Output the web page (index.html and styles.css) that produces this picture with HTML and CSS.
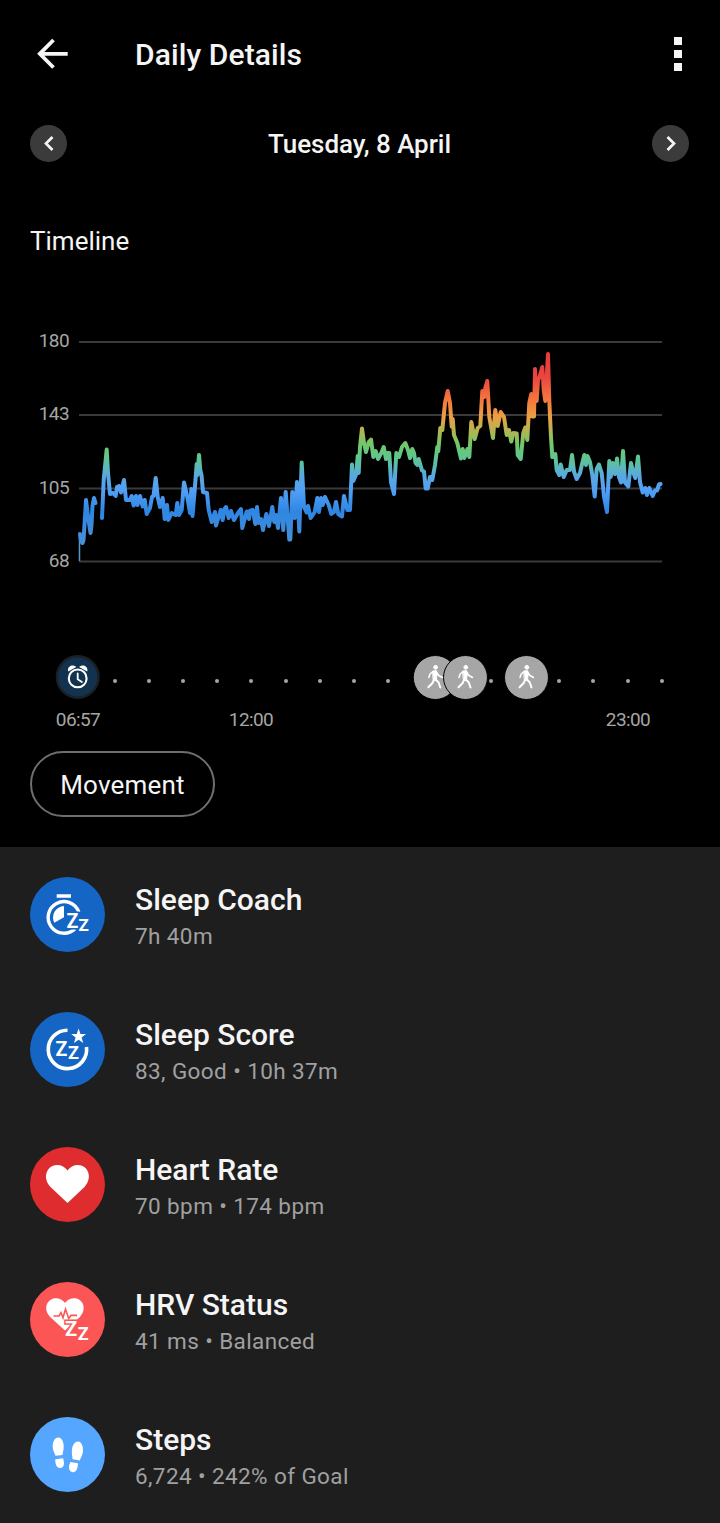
FILE: index.html
```html
<!DOCTYPE html>
<html lang="en">
<head>
    <meta charset="UTF-8">
    <meta name="viewport" content="width=device-width, initial-scale=1.0">
    <title>Daily Details</title>
    <link rel="stylesheet" href="styles.css">
</head>
<body>
    <header class="topbar">
        <svg class="back" width="32" height="32" viewBox="0 0 32 32"><path d="M30.700 15.800H3.500M16.500 2L2.800 15.800l13.700 13.700"/></svg>
        <h1>Daily Details</h1>
        <div class="menu"><i></i><i></i><i></i></div>
    </header>

    <nav class="day">
        <a class="arrow" href="#"><svg width="37" height="37" viewBox="0 0 37 37"><path d="M22.500 12l-6.500 6.500 6.500 6.500"/></svg></a>
        <span>Tuesday, 8 April</span>
        <a class="arrow" href="#"><svg width="37" height="37" viewBox="0 0 37 37"><path d="M15.500 12l6.500 6.500-6.500 6.500"/></svg></a>
    </nav>

    <section class="timeline">
        <h2>Timeline</h2>

        <svg class="chart" width="720" height="260" viewBox="0 320 720 260">
            <defs>
                <linearGradient id="zones" gradientUnits="userSpaceOnUse" x1="0" y1="352" x2="0" y2="562">
                    <stop offset="0" stop-color="#e93a3c"/>
                    <stop offset=".12" stop-color="#eb453e"/>
                    <stop offset=".22" stop-color="#f4743d"/>
                    <stop offset=".31" stop-color="#eda043"/>
                    <stop offset=".39" stop-color="#a5b957"/>
                    <stop offset=".44" stop-color="#70c86a"/>
                    <stop offset=".51" stop-color="#5ec594"/>
                    <stop offset=".59" stop-color="#58a9e0"/>
                    <stop offset=".66" stop-color="#519ff6"/>
                    <stop offset=".76" stop-color="#2f86e2"/>
                    <stop offset="1" stop-color="#5596d0"/>
                </linearGradient>
            </defs>
            <path class="grid" d="M79 342H662M79 415H662M79 488.500H662M79 561.500H662"/>
            <g class="axis">
                <text x="69" y="347">180</text>
                <text x="69" y="420">143</text>
                <text x="69" y="494">105</text>
                <text x="69" y="567">68</text>
            </g>
            <path d="M79.500 561V533" stroke="#5596d0" stroke-width="1.500"/>
            <g class="pulse">
                <polyline points="80,534 81,541 82.500,543 83.500,540 84.500,525 86,500 88,516 90.500,533 91.500,525 92.500,506 94,498 95.500,503"/>
                <polyline points="102,518 103.700,480 106.700,449.500 108,473 110,494 113,493 115.700,496 117,487 119,486 121,492.500 124,480 126,500 130,500 131.700,496 133.700,505.500 136,496 137.500,505 140,496 142.700,506.500 144.700,500 146.700,514 150,508 152,497 153.500,496 155.700,478 157.700,497 160,507 162.700,498 164.700,519 167,505 168.300,520 171.700,513 175.700,515 177.300,503 179,515 181.700,510 184,482.500 187.300,497 190,513 191.300,489 192.500,516 194.700,490 196.700,464 197.500,475 199,455 200.300,470 201.500,475 203,492 207,493 208.700,510 211.700,522 215,512 216,525.500 220.700,510 222.700,520 224.500,509 226,507 228.700,518 231,511 234,520 238,513 241,509 242.300,528 246.700,511.500 249,519 250,511 252.700,510 255.300,524 257,507 258.700,523 261,519 263,530 266.300,514 269,526 272.300,507 274.300,522 276,515 278,528 281,498 283.300,530 285.700,492 289.300,539.500 290.300,539.500 292.300,492 294.700,518 297,482 299.300,531.500 301.700,462.500 304,507 306.700,512.500 308,506 310.700,518 314.700,512 317.300,498 319,512 321,498 322.700,505 325,497 328.700,505 331.300,514 334,512 336,502 338.300,514 342,516.500 344,496 347.300,510 350,510 352,464.500 353.300,481 356.300,474 357.700,456 358.700,473 360,447 362,428.500 364,443 366,452 368.700,442 371,439.500 373.300,457 375.700,451 378,459 381.300,453 383.700,447 386,459 387.500,453 389.300,453 391,482 394,494 396.300,453 399,457 402,447 405.300,443 408,450 410,458 412.300,449 414,453 415.500,463 417.300,465 418.700,459 422,470.500 424,471.500 425.700,488.500 427.700,488.500 430,477 432.300,480 435,465 437.300,447 438.300,451 440.300,428 442.300,430 445,403 447.700,391 450,403 451.700,426.500 452.700,419 454,435 457.300,443 461,458.500 462.700,449 464.300,458 467.500,449 469.300,457 471.300,422 474.700,439 477.700,428 480.300,426 482.300,391 484.300,397 485.300,388 487.300,381 489.300,417 493,438 495.300,410 497.700,426 500.700,412 504,417 506.700,435 509,430 511.300,441.500 513.300,433 516.700,433.500 517.700,455 520.700,459 523.300,433 525.300,427.500 527.300,440 529.300,403 531.300,394 532.300,416.500 534,416.500 535,369 536.700,401 538,380 539.500,377 542.300,367 543.700,390 545.300,401 548,354 549.300,401 551,437 552.300,457 555.300,454 556.700,470 559.300,475 560.700,464.500 563.700,477 566.700,470 570,470 572,455 574,471.500 576.700,479 580,473 582.300,463 584.300,455 586,465 587.500,456 590,462 592.300,475 594.700,496.500 596.700,469 599,464.500 601.700,473 604,496.500 607,512 609.300,461 610.700,477 612.700,463 615,474 617,458.500 619,477 621,482.500 623,451 625,482.500 628.300,486.500 631,463 633,471.500 635.300,478 638,456.500 640,482 642.700,492.500 645.300,488 647,495 649.300,488 652.700,496 655,490.500 657,490.500 659,484.500 660.500,484"/>
            </g>
        </svg>

        <svg class="events" width="720" height="90" viewBox="0 650 720 90">
            <defs>
                <g id="walker">
                    <circle r="22" fill="#a6a6a6" stroke="#000" stroke-width="1"/>
                    <circle cx=".3" cy="-10.200" r="1.900" fill="#fff"/>
                    <path d="M-2.500-6.500L1-7 2-4 1 2h-3z" fill="#fff" stroke-width=".8"/>
                    <path d="M-2.300-6L-5.300-3.500-6.500 0M1-5.500L3.500-2 7 0" stroke-width="1.500"/>
                    <path d="M-1 1.500L-3 5.800-7 9.800M0 1.500L3.300 5 5 10" stroke-width="2"/>
                </g>
            </defs>
            <g fill="#a6a6a6">
                <circle cx="115" cy="681" r="2"/><circle cx="149" cy="681" r="2"/>
                <circle cx="183" cy="681" r="2"/><circle cx="217" cy="681" r="2"/>
                <circle cx="251" cy="681" r="2"/><circle cx="286" cy="681" r="2"/>
                <circle cx="320" cy="681" r="2"/><circle cx="354" cy="681" r="2"/>
                <circle cx="388" cy="681" r="2"/><circle cx="491" cy="681" r="2"/>
                <circle cx="559" cy="681" r="2"/><circle cx="593" cy="681" r="2"/>
                <circle cx="628" cy="681" r="2"/><circle cx="662" cy="681" r="2"/>
            </g>
            <g class="alarm" transform="translate(77.700 677)">
                <circle r="20.800" fill="#12324f" stroke="#1b2025" stroke-width="2.400"/>
                <circle cy="1.400" r="8.900" stroke="#fff" stroke-width="2.100"/>
                <path d="M0-3.500V2.200L4.200 5" stroke="#fff" stroke-width="1.800"/>
                <path d="M-9.500-5.500C-11-10.800-5-13.500-1.400-10zM9.500-5.500C11-10.800 5-13.500 1.400-10z" fill="#fff"/>
            </g>
            <use class="walk" href="#walker" x="435.300" y="677.500"/>
            <use class="walk" href="#walker" x="465.500" y="677.500"/>
            <use class="walk" href="#walker" x="526.500" y="677.500"/>
            <g class="hours">
                <text x="78" y="726">06:57</text>
                <text x="251" y="726">12:00</text>
                <text x="628" y="726">23:00</text>
            </g>
        </svg>

        <button class="pill">Movement</button>
    </section>

    <main class="stats">
        <div class="row">
            <svg class="icon coach" viewBox="0 0 75 75">
                <path d="M26.700 19H41" stroke="#fff" stroke-width="3.600"/>
                <path d="M48.800 35A15.800 15.800 0 1 0 45 51.700" stroke="#fff" stroke-width="3.400"/>
                <path d="M34 40.300V29A11.500 11.500 0 0 0 24.300 45.800z" fill="#fff"/>
                <text x="36.500" y="50.700" font-size="19.500">Z</text>
                <text x="48.600" y="54.200" font-size="17">Z</text>
            </svg>
            <div class="info">
                <h3>Sleep Coach</h3>
                <p>7h 40m</p>
            </div>
        </div>
        <div class="row">
            <svg class="icon score" viewBox="0 0 75 75">
                <path d="M37.500 18.200A19.200 19.200 0 1 0 56.500 35" stroke="#fff" stroke-width="3.600"/>
                <path d="M48.600 16.600l1.900 5.300 5.500.2-4.400 3.400 1.600 5.400-4.600-3.200-4.600 3.200 1.600-5.400-4.400-3.400 5.500-.2z" fill="#fff"/>
                <text x="25.500" y="44" font-size="19.500">Z</text>
                <text x="38" y="47.400" font-size="18">Z</text>
            </svg>
            <div class="info">
                <h3>Sleep Score</h3>
                <p>83, Good • 10h 37m</p>
            </div>
        </div>
        <div class="row">
            <svg class="icon heart" viewBox="0 0 75 75">
                <path id="heart" d="M37.500 56L20.500 40C11.500 30 17.500 18 27 18c4.500 0 8 2 10.500 5.500C40 20 43.500 18 48 18c9.500 0 15.500 12 6.500 22z" fill="#fff"/>
            </svg>
            <div class="info">
                <h3>Heart Rate</h3>
                <p>70 bpm • 174 bpm</p>
            </div>
        </div>
        <div class="row">
            <svg class="icon hrv" viewBox="0 0 75 75">
                <use href="#heart" transform="translate(2.200 1) scale(.875 .85)"/>
                <path d="M23.500 34H29l2-3.500 2 5.300 2.500-8.600 3.200 9.200 2.300-3h6" stroke="#fb5555" stroke-width="1.600"/>
                <text x="34.900" y="54.300" font-size="20">Z</text>
                <text x="47.700" y="58.400" font-size="18">Z</text>
            </svg>
            <div class="info">
                <h3>HRV Status</h3>
                <p>41 ms • Balanced</p>
            </div>
        </div>
        <div class="row">
            <svg class="icon steps" viewBox="0 0 75 75">
                <g fill="#fff">
                    <path d="M28.300 20.400c3.600 0 5.400 4.600 5.400 9 0 3.600-.9 5.700-1.200 8.600l-7 .8c-.8-3-2.800-5.500-2.800-9.400 0-4.700 2-9 5.600-9z"/>
                    <path d="M25.300 42.200l7.800-.9c.5 2 .9 3.500.9 5 0 3-1.500 4.700-3.900 4.700-3.600 0-4.900-4-4.800-8.800z"/>
                    <path d="M48.200 24.600c-3.600-.2-6 4.200-6.300 8.600-.3 3.600.5 6.200.7 9l7.200 1.200c.8-2.600 2.700-5 3.100-8.600.5-4.800-1.100-10-4.700-10.200z"/>
                    <path d="M48 46.300l-7.600-1.300c-.8 2-1.400 3.400-1.400 5 0 3.200 1.400 5 3.800 5.300 3.400.3 5.100-4.200 5.200-9z"/>
                </g>
            </svg>
            <div class="info">
                <h3>Steps</h3>
                <p>6,724 • 242% of Goal</p>
            </div>
        </div>
    </main>
</body>
</html>
```
FILE: styles.css
```css
* {
    box-sizing: border-box;
    margin: 0;
    padding: 0;
}

body {
    width: 720px;
    height: 1523px;
    overflow: hidden;
    background-color: #000;
    color: #f5f5f5;
    font-family: Roboto, sans-serif;
}

svg {
    display: block;
    fill: none;
}

/* header */
.topbar {
    display: flex;
    align-items: center;
    height: 108px;
    padding: 0 38px 0 37px;
}

.back {
    stroke: #f5f5f5;
    stroke-width: 3.8;
}

.topbar h1 {
    flex: 1;
    margin-left: 66px;
    font-size: 30px;
    font-weight: 500;
    letter-spacing: .1px;
}

.menu {
    display: flex;
    flex-direction: column;
    gap: 5px;
}

.menu i {
    width: 8px;
    height: 8px;
    background-color: #f5f5f5;
}

.day {
    display: flex;
    align-items: center;
    justify-content: space-between;
    height: 71px;
    padding: 0 31px 0 30px;
    font-size: 26px;
    font-weight: 500;
    letter-spacing: -.05px;
}

.arrow {
    width: 37px;
    height: 37px;
    border-radius: 50%;
    background-color: #3b3b3b;
}

.arrow svg {
    stroke: #f5f5f5;
    stroke-width: 2.7;
}

/* timeline */
.timeline {
    height: 668px;
    padding-top: 42px;
}

.timeline h2 {
    height: 99px;
    padding-left: 30px;
    line-height: 40px;
    font-size: 26px;
    font-weight: 400;
}

.grid {
    stroke: #3a3a3a;
    stroke-width: 2;
}

.axis, .hours {
    fill: #a6a6a6;
    font-size: 19px;
    letter-spacing: -.6px;
    text-anchor: end;
}

.hours {
    text-anchor: middle;
}

.pulse {
    stroke: url(#zones);
    stroke-width: 4;
    stroke-linecap: round;
    stroke-linejoin: round;
}

.events {
    margin-top: 70px;
}

.walk {
    stroke: #fff;
    stroke-linecap: round;
    stroke-linejoin: round;
}

.alarm {
    stroke-linecap: round;
}

.pill {
    display: block;
    width: 185px;
    height: 66px;
    margin: 11px 0 0 30px;
    padding-top: 2px;
    border: 2px solid #6e6e6e;
    border-radius: 33px;
    background: none;
    color: #f5f5f5;
    font-family: inherit;
    font-size: 26px;
    letter-spacing: .2px;
}

/* list */
.stats {
    height: 676px;
    padding: 30px 30px 0;
    background-color: #1e1e1e;
}

.row {
    display: flex;
    height: 135px;
}

.icon {
    width: 75px;
    height: 75px;
    margin-right: 30px;
    border-radius: 50%;
}

.icon text {
    font-weight: 700;
    fill: #fff;
    stroke-width: 3;
    paint-order: stroke;
}

.coach, .score {
    background-color: #1565c4;
    stroke: none;
}

.coach text, .score text {
    stroke: #1565c4;
}

.heart {
    background-color: #df2c2e;
}

.hrv {
    background-color: #fb5555;
}

.hrv text {
    stroke: #fb5555;
}

.steps {
    background-color: #55a6ff;
}

.info {
    padding-top: 4px;
}

.info h3 {
    line-height: 37px;
    font-size: 30px;
    font-weight: 500;
}

.info p {
    line-height: 36px;
    color: #a0a0a0;
    font-size: 22.5px;
    letter-spacing: .4px;
}
```
